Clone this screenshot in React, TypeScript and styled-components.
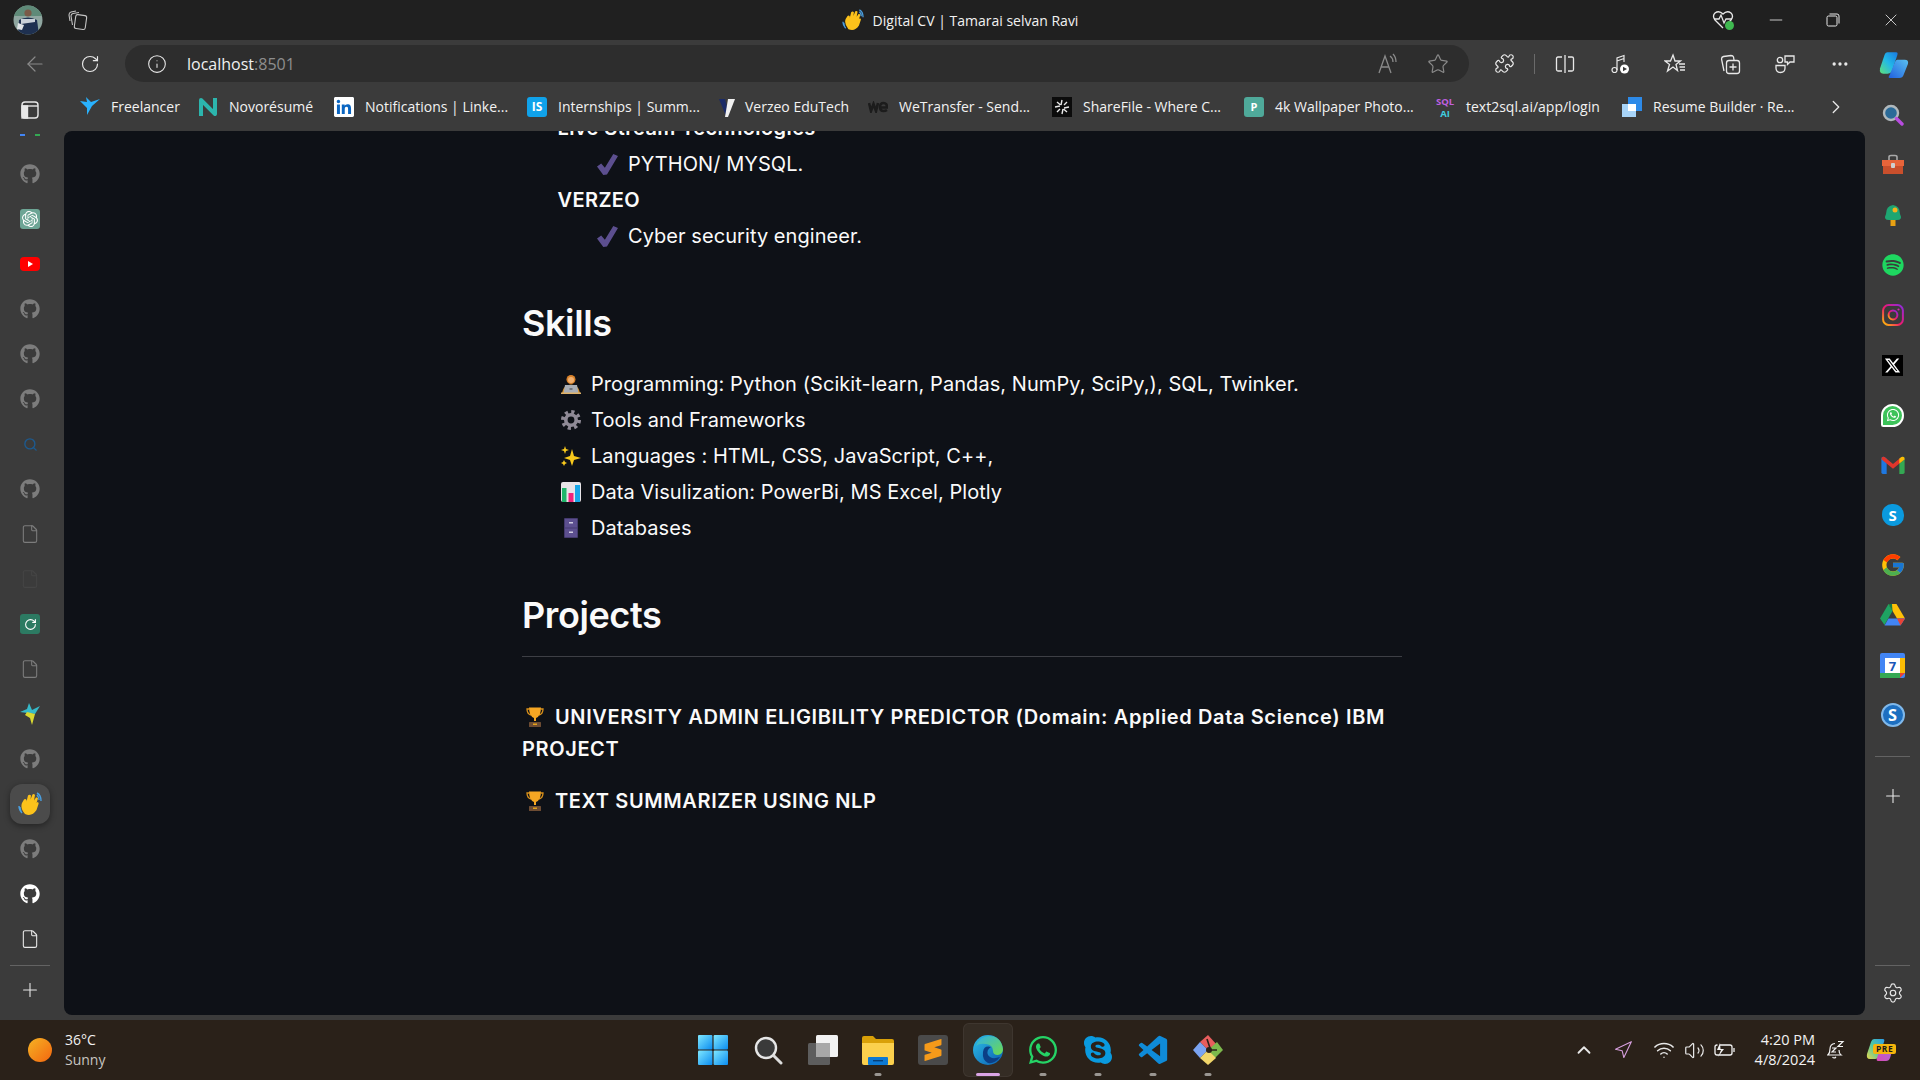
import React from 'react';
import styled, { createGlobalStyle } from 'styled-components';
import {
  ArrowLeft, RotateCw, Info, Star, Puzzle, Ellipsis, Plus, Settings, ChevronRight, ChevronUp,
  Search, File, Minus, X, Wifi, Volume2, Navigation,
} from 'lucide-react';
import { FaGithub, FaSpotify, FaWhatsapp, FaSkype } from 'react-icons/fa';
import { FaXTwitter } from 'react-icons/fa6';
import { SiOpenai, SiLinkedin, SiSublimetext } from 'react-icons/si';
import { FcGoogle } from 'react-icons/fc';
import { BiLogoVisualStudio } from 'react-icons/bi';

const Global = createGlobalStyle`
  html, body { margin: 0; padding: 0; background: #3b3b3b; }
  body { width: 1920px; height: 1080px; overflow: hidden; font-family: "Open Sans", "Liberation Sans", sans-serif; }
  * { box-sizing: border-box; }
`;

const Screen = styled.div`
  width: 1920px;
  height: 1080px;
  display: flex;
  flex-direction: column;
  background: #3b3b3b;
  overflow: hidden;
`;

/* title bar */
const TitleBar = styled.div`
  height: 40px;
  flex: none;
  background: #202020;
  display: grid;
  grid-template-columns: 1fr auto 1fr;
  align-items: center;
`;
const TitleLeft = styled.div`
  display: flex;
  align-items: center;
  padding-left: 13px;
  gap: 24px;
`;
const TitleCenter = styled.div`
  display: flex;
  align-items: center;
  gap: 9px;
  color: #f2f2f2;
  font-size: 14px;
`;
const TitleRight = styled.div`
  display: flex;
  justify-content: flex-end;
  align-items: center;
`;
const Slot = styled.div<{ $w: number }>`
  width: ${p => p.$w}px;
  flex: none;
  display: flex;
  align-items: center;
  justify-content: center;
  position: relative;
  color: #e8e8e8;
  svg { flex: none; }
`;
const OkBadge = styled.span`
  position: absolute;
  left: 27px;
  top: 11px;
  width: 9px;
  height: 9px;
  border-radius: 50%;
  background: #3fb950;
`;

/* toolbar */
const ToolBar = styled.div`
  height: 42px;
  flex: none;
  background: #3b3b3b;
  display: flex;
  align-items: flex-end;
  padding-left: 7.5px;
  ${Slot} { height: 37px; }
`;
const Address = styled.div`
  flex: 1;
  height: 37px;
  margin-left: 7.5px;
  padding: 0 6px 0 10px;
  background: #2d2d2d;
  border-radius: 19px;
  display: flex;
  align-items: center;
`;
const Url = styled.div`
  flex: 1;
  margin-left: 8px;
  font-size: 16px;
  color: #f0f0f0;
  span { color: #8d8d8d; }
`;
const Separator = styled.div`
  width: 1px;
  height: 20px;
  background: #6a6a6a;
`;

/* body */
const Middle = styled.div`
  flex: 1;
  display: flex;
  min-height: 0;
`;
const LeftRail = styled.div`
  width: 64px;
  flex: none;
  padding-right: 4px;
  display: flex;
  flex-direction: column;
  align-items: center;
`;
const RailTop = styled.div`
  height: 50px;
  display: flex;
  align-items: center;
  justify-content: center;
  padding-top: 6px;
  color: #e8e8e8;
`;
const PeekRow = styled.div`
  height: 19.5px;
  display: flex;
  gap: 10px;
  padding-top: 1px;
  align-items: flex-start;
`;
const PeekDot = styled.span<{ $c: string }>`
  width: 5px;
  height: 2px;
  margin-top: 1px;
  background: ${p => p.$c};
`;
const RailItem = styled.div<{ $active?: boolean; $h?: number }>`
  width: 40px;
  height: ${p => (p.$active ? 40 : p.$h ?? 45)}px;
  margin: ${p => (p.$active ? '2.5px 0' : '0')};
  flex: none;
  display: flex;
  align-items: center;
  justify-content: center;
  color: #7c7c7c;
  background: ${p => (p.$active ? '#4b4b4b' : 'transparent')};
  border-radius: 12px;
  box-shadow: ${p => (p.$active ? '0 2px 6px rgba(0,0,0,.4)' : 'none')};
`;
const RailDivider = styled.div<{ $w: number; $mt?: number }>`
  width: ${p => p.$w}px;
  height: 1px;
  flex: none;
  margin-top: ${p => p.$mt ?? 0}px;
  background: #636363;
`;
const GptTile = styled.div<{ $bg: string }>`
  width: 20px;
  height: 20px;
  border-radius: 3px;
  background: ${p => p.$bg};
  color: #fff;
  display: flex;
  align-items: center;
  justify-content: center;
`;
const Center = styled.div`
  flex: 1;
  min-width: 0;
  display: flex;
  flex-direction: column;
`;
const Bookmarks = styled.div`
  height: 49px;
  flex: none;
  display: flex;
  align-items: center;
  padding-left: 16px;
`;
const Bookmark = styled.div<{ $w: number; $gap?: number }>`
  width: ${p => p.$w}px;
  flex: none;
  display: flex;
  align-items: center;
  gap: ${p => p.$gap ?? 11}px;
  color: #f2f2f2;
  font-size: 14px;
  white-space: nowrap;
  svg { flex: none; }
`;
const BookmarkIcon = styled.div<{ $bg: string; $c?: string; $fs?: number }>`
  width: 20px;
  height: 20px;
  flex: none;
  border-radius: 3px;
  background: ${p => p.$bg};
  color: ${p => p.$c ?? '#fff'};
  font-size: ${p => p.$fs ?? 12}px;
  font-weight: 700;
  display: flex;
  align-items: center;
  justify-content: center;
`;
const Chevron = styled.div`
  margin-left: 25px;
  color: #e8e8e8;
  display: flex;
`;
const Page = styled.div`
  height: 884px;
  flex: none;
  background: #0e1117;
  border-radius: 8px;
  overflow: hidden;
  font-family: Inter, "Liberation Sans", sans-serif;
  color: #fafafa;
`;
const Content = styled.div`
  width: 880px;
  margin: -21px 0 0 458px;
`;
const Heading = styled.div`
  padding-left: 35.5px;
  font-size: 20px;
  font-weight: 600;
  line-height: 36px;
  height: 36px;
  letter-spacing: 0.4px;
`;
const CheckRow = styled.div`
  display: flex;
  align-items: center;
  gap: 10px;
  padding-left: 75px;
  height: 36px;
  font-size: 20px;
  letter-spacing: 0.06px;
`;
const Title = styled.h2<{ $mt: number }>`
  margin: ${p => p.$mt}px 0 0;
  font-size: 36px;
  line-height: 44px;
  font-weight: 600;
  letter-spacing: -0.4px;
`;
const SkillList = styled.div`
  margin-top: 20.5px;
  padding-left: 39px;
`;
const SkillRow = styled.div`
  display: flex;
  align-items: center;
  gap: 10px;
  height: 36px;
  font-size: 20px;
  letter-spacing: 0.06px;
`;
const CabinetBox = styled.span`
  width: 20px;
  display: flex;
  justify-content: center;
`;
const Rule = styled.hr`
  margin: 19px 0 0;
  border: 0;
  height: 1px;
  background: #3d3f45;
`;
const Project = styled.p<{ $mt: number }>`
  margin: ${p => p.$mt}px 0 0;
  font-size: 20px;
  line-height: 32px;
  font-weight: 600;
  letter-spacing: 0.62px;
  svg { vertical-align: -3px; margin: 0 11px 0 4px; }
`;
const BottomStrip = styled.div`
  flex: 1;
`;
const RightRail = styled.div`
  width: 55px;
  flex: none;
  display: flex;
  flex-direction: column;
  align-items: center;
  padding-top: 8px;
`;
const RightItem = styled.div<{ $h?: number; $mt?: number }>`
  height: ${p => p.$h ?? 50}px;
  margin-top: ${p => p.$mt ?? 0}px;
  width: 40px;
  flex: none;
  display: flex;
  align-items: center;
  justify-content: center;
  color: #e8e8e8;
`;
const Grow = styled.div`
  flex: 1;
`;
const XTile = styled.div`
  width: 21px;
  height: 21px;
  background: #000;
  color: #fff;
  display: flex;
  align-items: center;
  justify-content: center;
`;
const WaBubble = styled.div`
  width: 23px;
  height: 23px;
  border-radius: 50% 50% 50% 10%;
  background: #3dc35a;
  border: 2px solid #fff;
  color: #fff;
  display: flex;
  align-items: center;
  justify-content: center;
`;
const LetterBlob = styled.div<{ $round?: boolean; $size: number }>`
  width: ${p => p.$size}px;
  height: ${p => p.$size}px;
  border-radius: ${p => (p.$round ? '50%' : '45% 50% 45% 50%')};
  background: ${p => (p.$round ? '#1d6fc0' : '#0a9adf')};
  border: ${p => (p.$round ? '2px solid #7fb8ea' : 'none')};
  color: #fff;
  font-family: "Open Sans", sans-serif;
  font-weight: 700;
  font-size: ${p => p.$size * 0.68}px;
  line-height: 1;
  display: flex;
  align-items: center;
  justify-content: center;
`;

/* taskbar */
const TaskBar = styled.div`
  height: 60px;
  flex: none;
  background: #2a2119;
  display: grid;
  grid-template-columns: 1fr auto 1fr;
  align-items: center;
`;
const Weather = styled.div`
  display: flex;
  align-items: center;
  gap: 13px;
  padding-left: 28px;
  color: #f2f2f2;
  font-size: 14px;
  line-height: 20px;
`;
const Sun = styled.div`
  width: 24px;
  height: 24px;
  border-radius: 50%;
  background: linear-gradient(135deg, #f5b324, #f3660f);
`;
const Sunny = styled.div`
  color: #c8c5c1;
`;
const Dock = styled.div`
  display: flex;
  align-items: center;
`;
const DockItem = styled.div<{ $active?: boolean; $dot?: boolean }>`
  width: 55px;
  height: 54px;
  display: flex;
  align-items: center;
  justify-content: center;
  position: relative;
  &::before {
    content: '';
    display: ${p => (p.$active ? 'block' : 'none')};
    position: absolute;
    inset: 0 2.5px;
    border-radius: 6px;
    background: rgba(255,255,255,.05);
    border: 1px solid rgba(255,255,255,.05);
  }
  &::after {
    content: '';
    display: ${p => (p.$active || p.$dot ? 'block' : 'none')};
    position: absolute;
    bottom: 1px;
    left: 50%;
    transform: translateX(-50%);
    width: ${p => (p.$active ? 24 : 7)}px;
    height: 3px;
    border-radius: 2px;
    background: ${p => (p.$active ? '#dba4e4' : '#9a9692')};
  }
  svg { position: relative; }
`;
const Tray = styled.div`
  display: flex;
  justify-content: flex-end;
  align-items: center;
  padding-right: 15px;
`;
const Clock = styled.div`
  width: 69px;
  flex: none;
  white-space: nowrap;
  display: flex;
  flex-direction: column;
  align-items: flex-end;
  color: #f2f2f2;
  font-size: 14.5px;
  line-height: 20px;
`;
const SublimeTile = styled.div`
  width: 30px;
  height: 30px;
  border-radius: 3px;
  background: #4a4a4a;
  color: #f59a1a;
  display: flex;
  align-items: center;
  justify-content: center;
  position: relative;
`;
const PreBadge = styled.span`
  position: absolute;
  left: 18px;
  top: 6px;
  background: #f5b40c;
  color: #1a1a1a;
  font-size: 8.5px;
  font-weight: 700;
  padding: 0 3px;
  line-height: 10px;
  border-radius: 2px;
  letter-spacing: .5px;
`;

/* drawings */
const Avatar = () => (
  <svg width="30" height="30" viewBox="0 0 30 30">
    <defs><clipPath id="av"><circle cx="15" cy="15" r="14.5" /></clipPath></defs>
    <g clipPath="url(#av)">
      <rect width="30" height="30" fill="#8fa6a0" />
      <rect width="30" height="11" fill="#5f8a78" />
      <circle cx="15" cy="8" r="3.6" fill="#7a5a48" />
      <path d="M5 30 L6 15 Q15 10 24 15 L26 30Z" fill="#1e3050" />
      <path d="M8 14 L22 14 L22 17 L8 19Z" fill="#c9d0d8" />
      <path d="M5 18 L11 20 L9 25 L4 24Z" fill="#dfe3e6" />
    </g>
  </svg>
);
const TabsIcon = () => (
  <svg width="22" height="22" viewBox="0 0 22 22" fill="none" stroke="#c4c4c4" strokeWidth="1.1">
    <rect x="8" y="6" width="11" height="14" rx="2" transform="rotate(8 13 13)" />
    <path d="M5.5 16 L4 7 Q4 5 6 4.5 L12 3.5" />
    <path d="M3 12 L2 6 Q2 3.5 4 3 L9 2" />
  </svg>
);
const Wave = ({ s }: { s: number }) => (
  <svg width={s} height={s} viewBox="0 0 24 24">
    <path d="M4 21 Q1 18 1 14 M3 19 Q2 17 2 15" stroke="#4a9fe0" strokeWidth="1.4" fill="none" />
    <path d="M19 1 Q23 3 23 9 M19 3 Q21 5 21 8" stroke="#4a9fe0" strokeWidth="1.4" fill="none" />
    <path d="M7 22 Q2 16 4 11 L6 7.5 Q7.5 6.5 8.5 8 L8.5 9.5 L10 3.5 Q11.5 2 13 3.5 L12.5 7.5 L14.5 2.5 Q16 1.5 17 3 L16 8.5 L18 5.5 Q19.5 5 20 6.5 L18.5 11 L19.5 10 Q21 10.5 20.5 12 L18.5 18 Q14 25 7 22Z" fill="#fcc21b" />
  </svg>
);
const Check = () => (
  <svg width="21" height="21" viewBox="0 0 20 20"><path d="M0 12 L4 9 L7.5 13 L15.5 0 L20 2 L9.5 19.5 L6 20Z" fill="#5c4f8f" /></svg>
);
const Trophy = () => (
  <svg width="18" height="20" viewBox="0 0 18 20">
    <path d="M3 2 H1 Q1 7 5 8 M15 2 H17 Q17 7 13 8" stroke="#d9901a" strokeWidth="1.3" fill="none" />
    <path d="M3 0.5 H15 Q15 9 10 11 V14 H8 V11 Q3 9 3 0.5Z" fill="#f5a623" />
    <rect x="3" y="15" width="12" height="5" rx="0.5" fill="#6d4c33" />
    <rect x="7" y="16.5" width="4" height="1.5" fill="#e3a21a" />
  </svg>
);
const Worker = () => (
  <svg width="20" height="20" viewBox="0 0 20 20">
    <circle cx="10" cy="5.5" r="4.5" fill="#d9822b" />
    <circle cx="10" cy="6" r="3" fill="#f0b070" />
    <path d="M1 19 Q2 11 10 10.5 Q18 11 19 19Z" fill="#d9952f" />
    <path d="M4 11 H16 L17.5 19 H2.5Z" fill="#a9aeb6" />
    <rect x="8.5" y="14" width="3" height="2" fill="#70757d" />
    <rect y="18.5" width="20" height="1.5" fill="#e0b36a" />
  </svg>
);
const Gear = () => (
  <svg width="20" height="20" viewBox="0 0 20 20" fill="none" stroke="#8f8a96">
    <circle cx="10" cy="10" r="5.2" strokeWidth="3.6" />
    <circle cx="10" cy="10" r="8" strokeWidth="4" strokeDasharray="3.1 3.18" />
  </svg>
);
const Sparkles = () => (
  <svg width="20" height="20" viewBox="0 0 20 20" fill="#f8c91c">
    <path d="M11 3 L13 10 L20 12 L13 14 L11 20 L9 14 L3 12 L9 10Z" />
    <path d="M4 0 L5 3 L8 4 L5 5 L4 8 L3 5 L0 4 L3 3Z" />
    <path d="M3 14 L4 16 L6 17 L4 18 L3 20 L2 18 L0 17 L2 16Z" />
  </svg>
);
const BarChart = () => (
  <svg width="20" height="20" viewBox="0 0 20 20">
    <rect width="20" height="20" rx="2" fill="#e8e4e8" />
    <rect x="1" y="6" width="4.5" height="14" fill="#1fb56a" />
    <rect x="7.5" y="11" width="5" height="9" fill="#f0247c" />
    <rect x="14" y="3" width="5" height="17" fill="#18a7e8" />
  </svg>
);
const Cabinet = () => (
  <svg width="14" height="20" viewBox="0 0 14 20">
    <rect width="14" height="20" rx="1" fill="#443a6e" />
    <rect x="1" y="1" width="12" height="8.5" fill="#5c4f8f" />
    <rect x="1" y="10.5" width="12" height="8.5" fill="#5c4f8f" />
    <rect x="5" y="4" width="4" height="1.5" fill="#cfcbe0" />
    <rect x="5" y="13.5" width="4" height="1.5" fill="#cfcbe0" />
  </svg>
);
const ReadAloud = () => (
  <svg width="24" height="24" viewBox="0 0 24 24" fill="none" stroke="#8a8a8a" strokeWidth="1.3">
    <path d="M3 21 L9 4 L15 21 M5 15 H13" />
    <path d="M14 4 Q17 6 17 10 M17 2 Q20 5 20 10" />
  </svg>
);
const SplitIcon = () => (
  <svg width="20" height="20" viewBox="0 0 20 20" fill="none" stroke="#e8e8e8" strokeWidth="1.3">
    <path d="M7 3 H3 Q1.5 3 1.5 4.5 V15.5 Q1.5 17 3 17 H7 M10 1 V19 M13 3 H17 Q18.5 3 18.5 4.5 V15.5 Q18.5 17 17 17 H13" />
  </svg>
);
const MusicIcon = () => (
  <svg width="22" height="22" viewBox="0 0 22 22" fill="none" stroke="#e8e8e8" strokeWidth="1.2">
    <circle cx="5.5" cy="17" r="2.5" />
    <path d="M8 17 V5 L15 2.5 V9 M8 8 L15 5.5" />
    <circle cx="15.5" cy="16" r="4.5" fill="#fff" stroke="none" />
    <path d="M14 13.8 L18 16 L14 18.2Z" fill="#3b3b3b" stroke="none" />
  </svg>
);
const FavList = () => (
  <svg width="22" height="22" viewBox="0 0 22 22" fill="none" stroke="#e8e8e8" strokeWidth="1.3">
    <path d="M9 2 L11 8 H16.5 L12 11.5 L13.5 17.5 L9 14 L3.5 18 L5.5 11.5 L1 8 H6.5Z" />
    <path d="M15 11 H21 M15.5 14 H21 M16 17 H21" />
  </svg>
);
const CollectIcon = () => (
  <svg width="22" height="22" viewBox="0 0 22 22" fill="none" stroke="#e8e8e8" strokeWidth="1.3">
    <path d="M5 18 L2.5 6 Q2.5 4 4.5 3.5 L12 2.5 Q14 2.5 14.5 4 L15 7" />
    <rect x="7.5" y="7.5" width="13" height="13" rx="2.5" />
    <path d="M14 10.5 V17.5 M10.5 14 H17.5" />
  </svg>
);
const ShareIcon = () => (
  <svg width="22" height="22" viewBox="0 0 22 22" fill="none" stroke="#e8e8e8" strokeWidth="1.3">
    <circle cx="6" cy="7" r="2.7" />
    <path d="M2 12.5 H11 V15 Q11 19.5 6.5 19.5 Q2 19.5 2 15Z" />
    <path d="M11 3 H20 V9 H16 L13.5 11.5 V9 H11Z" />
  </svg>
);
const Copilot = () => (
  <svg width="30" height="30" viewBox="0 0 28 28">
    <defs>
      <linearGradient id="cp1" x1="0" y1="1" x2="1" y2="0"><stop offset="0" stopColor="#5ee07a" /><stop offset=".5" stopColor="#22b8e8" /><stop offset="1" stopColor="#1a78e0" /></linearGradient>
      <linearGradient id="cp2" x1="0" y1="1" x2="1" y2="0"><stop offset="0" stopColor="#2060e0" /><stop offset="1" stopColor="#5ac0f0" /></linearGradient>
    </defs>
    <path d="M8 3 H16 Q18 3 17 6 L12 21 Q11 23 8 23 H4 Q0 23 1 18 L5 6 Q6 3 8 3Z" fill="url(#cp1)" />
    <path d="M17 10 H24 Q28 10 27 14 L23 24 Q22 27 19 27 H10 Q8 27 10 24 L15 12 Q16 10 17 10Z" fill="url(#cp2)" />
  </svg>
);
const CopilotPre = () => (
  <svg width="28" height="24" viewBox="0 0 28 24">
    <defs>
      <linearGradient id="cq1" x1="0" y1="1" x2="1" y2="0"><stop offset="0" stopColor="#e8d84a" /><stop offset=".5" stopColor="#50c8a0" /><stop offset="1" stopColor="#2a9ae8" /></linearGradient>
      <linearGradient id="cq2" x1="0" y1="1" x2="1" y2="0"><stop offset="0" stopColor="#d84ab0" /><stop offset="1" stopColor="#a070e8" /></linearGradient>
    </defs>
    <path d="M8 1 H17 Q19 1 18 4 L13 18 Q12 21 9 21 H4 Q0 21 1 16 L5 4 Q6 1 8 1Z" fill="url(#cq1)" />
    <path d="M17 6 H24 Q28 6 27 10 L24 20 Q23 23 20 23 H12 Q10 23 11 20 L15 8 Q16 6 17 6Z" fill="url(#cq2)" />
  </svg>
);
const HealthIcon = () => (
  <svg width="22" height="20" viewBox="0 0 22 20" fill="none" stroke="#e8e8e8" strokeWidth="1.3">
    <path d="M11 18 L3 10 Q0 6 3 3 Q7 0 11 4 Q15 0 19 3 Q22 6 19 10 L16 13" />
    <path d="M2 9 H7 L9 5 L12 13 L14 9 H20" />
  </svg>
);
const RestoreIcon = () => (
  <svg width="14" height="14" viewBox="0 0 14 14" fill="none" stroke="#e8e8e8" strokeWidth="1">
    <rect x="1" y="3" width="10" height="10" rx="1.5" />
    <path d="M3.5 1 H11 Q13 1 13 3 V10.5" />
  </svg>
);
const Bird = () => (
  <svg width="20" height="22" viewBox="0 0 20 22">
    <path d="M0 9 L7 6 L9 0 L12 7 L20 3 L15 11 Z" fill="#35b9c9" />
    <path d="M7 9 L15 11 L12 22 L10 15 L5 12 Z" fill="#d8d832" />
  </svg>
);
const FreelancerBird = () => (
  <svg width="20" height="20" viewBox="0 0 20 20">
    <path d="M0 4 L7 5 L6 0 L11 5 L20 2 L12 9 L7 18 L7 11 Z" fill="#29b2fe" />
  </svg>
);
const NovoIcon = () => (
  <svg width="20" height="20" viewBox="0 0 20 20" fill="none" stroke="#2cb5ad" strokeWidth="4" strokeLinejoin="round">
    <path d="M3 19 V3 L17 17 V1" />
  </svg>
);
const VerzeoIcon = () => (
  <svg width="20" height="20" viewBox="0 0 20 20">
    <path d="M2 2 H8 L11 14 L9 19Z" fill="#1a2a66" />
    <path d="M11 2 H18 L11 20 H8Z" fill="#f0f0f0" />
  </svg>
);
const ShareFile = () => (
  <svg width="20" height="20" viewBox="0 0 20 20">
    <rect width="20" height="20" fill="#0b0b0b" />
    <g stroke="#e8e8e8" strokeWidth="1.4">
      <path d="M10 3 L9 8 M10 17 L11 12 M3 10 L8 9 M17 10 L12 11 M5 5 L8.5 8 M15 15 L11.5 12 M15 5 L12 8 M5 15 L8 12" />
    </g>
  </svg>
);
const SqlIcon = () => (
  <svg width="20" height="26" viewBox="0 0 20 26">
    <text x="10" y="11" textAnchor="middle" fontSize="9.5" fontWeight="700" fontFamily="Open Sans" fill="#c060e0">SQL</text>
    <text x="10" y="23" textAnchor="middle" fontSize="9.5" fontWeight="700" fontFamily="Open Sans" fill="#40d0e0">AI</text>
  </svg>
);
const ResumeIcon = () => (
  <svg width="20" height="20" viewBox="0 0 20 20">
    <rect x="6" y="0" width="14" height="14" fill="#2d8ae8" />
    <rect x="0" y="7" width="14" height="13" fill="#a8d4f8" />
    <rect x="6" y="7" width="8" height="7" fill="#fff" />
  </svg>
);
const WeIcon = () => (
  <svg width="20" height="12" viewBox="0 0 20 12" fill="none" stroke="#1c1c1c" strokeWidth="2.6">
    <path d="M1 2 L3 10 L5.5 3 L8 10 L10 2" />
    <path d="M12 6.5 H19 Q19 2 15.5 2 Q12 2 12 6 Q12 10 15.5 10 Q17.5 10 19 9" />
  </svg>
);
const Magnifier = () => (
  <svg width="22" height="22" viewBox="0 0 22 22">
    <circle cx="9" cy="9" r="7" fill="#2a6a98" stroke="#b0b8bc" strokeWidth="2.4" />
    <path d="M14.5 14.5 L20 20" stroke="#b84ce0" strokeWidth="3.4" strokeLinecap="round" />
  </svg>
);
const Toolbox = () => (
  <svg width="24" height="22" viewBox="0 0 24 22">
    <path d="M8 6 V3 Q8 1.5 10 1.5 H14 Q16 1.5 16 3 V6" stroke="#a8a8a8" strokeWidth="1.6" fill="none" />
    <rect x="1" y="6" width="22" height="6" fill="#e8643a" />
    <rect x="2" y="12" width="20" height="8" fill="#c94f2c" />
    <rect x="10" y="9" width="4" height="5" rx="1" fill="#cfcfcf" />
  </svg>
);
const Tree = () => (
  <svg width="20" height="22" viewBox="0 0 20 22">
    <path d="M10 1 Q17 2 17 10 Q20 16 14 16 H6 Q0 16 3 10 Q3 2 10 1Z" fill="#1ea672" />
    <rect x="7.5" y="16" width="5" height="6" fill="#e8a012" />
    <circle cx="12" cy="6" r="2.5" fill="#f6b21b" />
  </svg>
);
const Insta = () => (
  <svg width="22" height="22" viewBox="0 0 20 20" fill="none">
    <defs><linearGradient id="ig" x1="0" y1="1" x2="1" y2="0"><stop offset="0" stopColor="#ffc400" /><stop offset=".45" stopColor="#f0186c" /><stop offset="1" stopColor="#8a2be2" /></linearGradient></defs>
    <rect x="1" y="1" width="18" height="18" rx="5" stroke="url(#ig)" strokeWidth="1.8" />
    <circle cx="10" cy="10" r="4" stroke="url(#ig)" strokeWidth="1.8" />
    <circle cx="15" cy="5" r="1" fill="#d02cb0" />
  </svg>
);
const Gmail = () => (
  <svg width="24" height="19" viewBox="0 0 22 18">
    <path d="M0 3 Q0 0 3 1 L5 2.5 V17 H1.5 Q0 17 0 15.5Z" fill="#1f78e0" />
    <path d="M22 3 Q22 0 19 1 L17 2.5 V17 H20.5 Q22 17 22 15.5Z" fill="#34a853" />
    <path d="M0 3 Q0 0 3 1 L11 7.5 L19 1 Q20 0.5 22 3 L11 12 Z" fill="#e0352b" />
    <path d="M17 2.5 L19 1 Q22 0 22 3 L17 7Z" fill="#fbbc04" />
  </svg>
);
const Drive = () => (
  <svg width="25" height="22" viewBox="0 0 25 22">
    <path d="M8.5 0 H16.5 L25 14.5 H17Z" fill="#ffc107" />
    <path d="M8.5 0 L12.5 7 L4.5 21 L0 14.5Z" fill="#1ea362" />
    <path d="M4.5 21.5 L8.5 14.5 H25 L20.5 21.5Z" fill="#4285f4" />
    <path d="M20.5 21.5 L17 14.5 H25Z" fill="#ea4335" />
    <path d="M8.5 0 H12 L12.5 7 Z" fill="#157a46" />
  </svg>
);
const Calendar = () => (
  <svg width="25" height="25" viewBox="0 0 25 25">
    <rect width="25" height="25" rx="2" fill="#4285f4" />
    <rect x="5" y="5" width="15" height="15" fill="#fff" />
    <rect x="20" y="5" width="5" height="15" fill="#fbbc04" />
    <rect y="20" width="20" height="5" fill="#34a853" />
    <path d="M20 20 H25 L20 25Z" fill="#ea4335" />
    <text x="12.5" y="17.5" textAnchor="middle" fontSize="13" fontWeight="700" fontFamily="Open Sans" fill="#1a56b8">7</text>
  </svg>
);
const WinLogo = () => (
  <svg width="30" height="30" viewBox="0 0 30 30">
    <defs><linearGradient id="wn" x1="0" y1="0" x2="1" y2="1"><stop offset="0" stopColor="#7fe8ff" /><stop offset="1" stopColor="#0a8cf0" /></linearGradient></defs>
    <rect width="14.4" height="14.4" rx="1" fill="url(#wn)" />
    <rect x="15.6" width="14.4" height="14.4" rx="1" fill="url(#wn)" />
    <rect y="15.6" width="14.4" height="14.4" rx="1" fill="url(#wn)" />
    <rect x="15.6" y="15.6" width="14.4" height="14.4" rx="1" fill="url(#wn)" />
  </svg>
);
const TaskSearch = () => (
  <svg width="30" height="30" viewBox="0 0 30 30" fill="none">
    <circle cx="13" cy="13" r="10" fill="#3a3a3a" stroke="#e6e6e6" strokeWidth="2.4" />
    <path d="M21 21 L28 28" stroke="#dcdcdc" strokeWidth="3" strokeLinecap="round" />
  </svg>
);
const TaskView = () => (
  <svg width="30" height="30" viewBox="0 0 30 30">
    <rect x="0" y="8" width="22" height="22" rx="1.5" fill="#5d5d5d" />
    <rect x="8" y="0" width="22" height="22" rx="1.5" fill="#f2f2f2" />
    <rect x="8" y="8" width="14" height="14" fill="#a8a8a8" />
  </svg>
);
const Folder = () => (
  <svg width="32" height="30" viewBox="0 0 32 30">
    <path d="M0 3 Q0 1 2 1 H11 L14 4 H30 Q32 4 32 6 V28 H0Z" fill="#d9a008" />
    <path d="M0 8 H32 V28 Q32 30 30 30 H2 Q0 30 0 28Z" fill="#fbd04d" />
    <rect x="6" y="22" width="20" height="8" rx="1" fill="#0c79d4" />
    <rect x="11" y="25" width="10" height="1.4" fill="#063f78" />
  </svg>
);
const Edge = () => (
  <svg width="30" height="30" viewBox="0 0 30 30">
    <defs>
      <linearGradient id="eg1" x1="0" y1="0" x2="1" y2="1"><stop offset="0" stopColor="#2ec0e8" /><stop offset="1" stopColor="#0a5cb0" /></linearGradient>
      <linearGradient id="eg2" x1="0" y1="0" x2="1" y2="1"><stop offset="0" stopColor="#2fb0e8" /><stop offset="1" stopColor="#6fdc4c" /></linearGradient>
    </defs>
    <circle cx="15" cy="15" r="15" fill="url(#eg1)" />
    <path d="M3 11 Q7 1 16 1 Q28 1 30 14 Q30 19 25 20 Q20 20 20 16 Q20 10 13 9 Q6 8 3 11Z" fill="url(#eg2)" />
    <path d="M10 17 Q11 10 18 12 Q13 15 15 20 Q18 25 27 22 Q22 29 15 28 Q9 25 10 17Z" fill="#0b3f86" />
  </svg>
);
const GitApp = () => (
  <svg width="30" height="30" viewBox="0 0 30 30">
    <path d="M15 0 L24 10 L15 15 L7 7Z" fill="#e85d5d" />
    <path d="M0 15 L7 7 L15 15 L7 23Z" fill="#7ba4f2" />
    <path d="M24 7 L30 15 L22 23 L15 15Z" fill="#7cb84c" />
    <path d="M7 23 L15 15 L23 23 L15 30Z" fill="#f2d66a" />
    <circle cx="16" cy="15" r="3" fill="#2a2119" />
    <path d="M14 4 L17 13 M18 15 H24" stroke="#2a2119" strokeWidth="1.6" />
  </svg>
);
const BellZ = () => (
  <svg width="20" height="20" viewBox="0 0 20 20" fill="none" stroke="#f2f2f2" strokeWidth="1.2">
    <path d="M3 15 Q5 13 5 9 Q5 4 10 3.5 M2 15 H16 Q14 13.5 14 10 M7.5 17 Q9 19 11 17" />
    <path d="M7 8 H11 L7 12 H11 M13 1.5 H18 L13 6.5 H18" />
  </svg>
);
const Battery = () => (
  <svg width="22" height="16" viewBox="0 0 22 16" fill="none" stroke="#f2f2f2" strokeWidth="1.3">
    <path d="M7 3 H17 Q19 3 19 5 V11 Q19 13 17 13 H4 Q2 13 2 11 V5 Q2 3 4 3 H4.5" />
    <path d="M21 6 V10" />
    <path d="M7 1 L4 8 H8 L5 15 L11 7 H7.5Z" fill="#f2f2f2" stroke="none" />
  </svg>
);

const bookmarks: { w: number; gap?: number; label: string; icon: React.ReactNode }[] = [
  { w: 118, label: 'Freelancer', icon: <FreelancerBird /> },
  { w: 136, label: 'Novorésumé', icon: <NovoIcon /> },
  { w: 193, label: 'Notifications | Linke...', icon: <BookmarkIcon $bg="#0a66c2" $fs={13}><SiLinkedin size={20} /></BookmarkIcon> },
  { w: 190, label: 'Internships | Summ...', icon: <BookmarkIcon $bg="#10a2ea">IS</BookmarkIcon> },
  { w: 151, gap: 8, label: 'Verzeo EduTech', icon: <VerzeoIcon /> },
  { w: 184, label: 'WeTransfer - Send...', icon: <WeIcon /> },
  { w: 192, label: 'ShareFile - Where C...', icon: <ShareFile /> },
  { w: 191, label: '4k Wallpaper Photo...', icon: <BookmarkIcon $bg="#4fa99a" $fs={11}>P</BookmarkIcon> },
  { w: 187, label: 'text2sql.ai/app/login', icon: <SqlIcon /> },
  { w: 178, label: 'Resume Builder · Re...', icon: <ResumeIcon /> },
];

const leftRail: React.ReactNode[] = [
  <FaGithub size={20} />,
  <GptTile $bg="#6da595"><SiOpenai size={16} /></GptTile>,
  <GptTile $bg="transparent"><svg width="20" height="14" viewBox="0 0 20 14"><rect width="20" height="14" rx="4" fill="#f00" /><path d="M8 4 L13 7 L8 10Z" fill="#fff" /></svg></GptTile>,
  <FaGithub size={20} />,
  <FaGithub size={20} />,
  <FaGithub size={20} />,
  <Search size={15} color="#1d5a8f" strokeWidth={2.2} />,
  <FaGithub size={20} />,
  <File size={20} strokeWidth={1.3} />,
  <File size={20} color="#454545" strokeWidth={1.3} />,
  <GptTile $bg="#2c7a62"><RotateCw size={13} /></GptTile>,
  <File size={20} strokeWidth={1.3} />,
  <Bird />,
  <FaGithub size={20} />,
  <Wave s={24} />,
  <FaGithub size={20} />,
  <FaGithub size={20} color="#ffffff" />,
  <File size={20} color="#e8e8e8" strokeWidth={1.3} />,
];

const rightRail: React.ReactNode[] = [
  <Magnifier />,
  <Toolbox />,
  <Tree />,
  <FaSpotify size={22} color="#1ed760" />,
  <Insta />,
  <XTile><FaXTwitter size={17} /></XTile>,
  <WaBubble><FaWhatsapp size={14} /></WaBubble>,
  <Gmail />,
  <LetterBlob $size={22}>S</LetterBlob>,
  <FcGoogle size={26} />,
  <Drive />,
  <Calendar />,
  <LetterBlob $round $size={24}>S</LetterBlob>,
];

const skills: { icon: React.ReactNode; text: string }[] = [
  { icon: <Worker />, text: 'Programming: Python (Scikit-learn, Pandas, NumPy, SciPy,), SQL, Twinker.' },
  { icon: <Gear />, text: 'Tools and Frameworks' },
  { icon: <Sparkles />, text: 'Languages : HTML, CSS, JavaScript, C++,' },
  { icon: <BarChart />, text: 'Data Visulization: PowerBi, MS Excel, Plotly' },
  { icon: <CabinetBox><Cabinet /></CabinetBox>, text: 'Databases' },
];

export default function App() {
  return (
    <Screen>
      <Global />
      <TitleBar>
        <TitleLeft><Avatar /><TabsIcon /></TitleLeft>
        <TitleCenter><Wave s={22} />Digital CV | Tamarai selvan Ravi</TitleCenter>
        <TitleRight>
          <Slot $w={50}><HealthIcon /><OkBadge /></Slot>
          <Slot $w={56}><Minus size={20} strokeWidth={1} /></Slot>
          <Slot $w={58}><RestoreIcon /></Slot>
          <Slot $w={58}><X size={20} strokeWidth={1} /></Slot>
        </TitleRight>
      </TitleBar>

      <ToolBar>
        <Slot $w={55}><ArrowLeft size={24} color="#8a8a8a" strokeWidth={1.2} /></Slot>
        <Slot $w={55}><RotateCw size={20} strokeWidth={1.4} /></Slot>
        <Address>
          <Slot $w={44}><Info size={20} strokeWidth={1.3} /></Slot>
          <Url>localhost<span>:8501</span></Url>
          <Slot $w={50}><ReadAloud /></Slot>
          <Slot $w={50}><Star size={22} color="#8a8a8a" strokeWidth={1.3} /></Slot>
        </Address>
        <Slot $w={8.5} />
        <Slot $w={55}><Puzzle size={21} strokeWidth={1.4} /></Slot>
        <Slot $w={5.5}><Separator /></Slot>
        <Slot $w={55}><SplitIcon /></Slot>
        <Slot $w={55}><MusicIcon /></Slot>
        <Slot $w={55}><FavList /></Slot>
        <Slot $w={55}><CollectIcon /></Slot>
        <Slot $w={55}><ShareIcon /></Slot>
        <Slot $w={55}><Ellipsis size={20} /></Slot>
        <Slot $w={52.5}><Copilot /></Slot>
      </ToolBar>

      <Middle>
        <LeftRail>
          <RailTop>
            <svg width="18" height="18" viewBox="0 0 18 18" fill="none" stroke="#e8e8e8" strokeWidth="1.4"><rect x="1" y="1" width="16" height="16" rx="3" /><path d="M1 5 H17" /><rect x="1" y="5" width="5.5" height="12" fill="#e8e8e8" /></svg>
          </RailTop>
          <PeekRow><PeekDot $c="#4285f4" /><PeekDot $c="#34a853" /></PeekRow>
          {leftRail.map((icon, i) => <RailItem key={i} $active={i === 14}>{icon}</RailItem>)}
          <RailDivider $w={40} $mt={3} />
          <RailItem $h={48}><Plus size={22} color="#e8e8e8" strokeWidth={1.2} /></RailItem>
        </LeftRail>

        <Center>
          <Bookmarks>
            {bookmarks.map(b => <Bookmark key={b.label} $w={b.w} $gap={b.gap}>{b.icon}{b.label}</Bookmark>)}
            <Chevron><ChevronRight size={22} strokeWidth={1.4} /></Chevron>
          </Bookmarks>
          <Page>
            <Content>
              <Heading>Live Stream Technologies</Heading>
              <CheckRow><Check />PYTHON/ MYSQL.</CheckRow>
              <Heading>VERZEO</Heading>
              <CheckRow><Check />Cyber security engineer.</CheckRow>
              <Title $mt={47}>Skills</Title>
              <SkillList>
                {skills.map(s => <SkillRow key={s.text}>{s.icon}{s.text}</SkillRow>)}
              </SkillList>
              <Title $mt={47}>Projects</Title>
              <Rule />
              <Project $mt={44}><Trophy />UNIVERSITY ADMIN ELIGIBILITY PREDICTOR (Domain: Applied Data Science) IBM PROJECT</Project>
              <Project $mt={20}><Trophy />TEXT SUMMARIZER USING NLP</Project>
            </Content>
          </Page>
          <BottomStrip />
        </Center>

        <RightRail>
          {rightRail.map((icon, i) => <RightItem key={i}>{icon}</RightItem>)}
          <RailDivider $w={35} $mt={16} />
          <RightItem $h={40} $mt={19}><Plus size={22} strokeWidth={1.2} /></RightItem>
          <Grow />
          <RailDivider $w={35} />
          <RightItem $h={54}><Settings size={22} strokeWidth={1.3} /></RightItem>
        </RightRail>
      </Middle>

      <TaskBar>
        <Weather>
          <Sun />
          <div>36°C<Sunny>Sunny</Sunny></div>
        </Weather>
        <Dock>
          <DockItem><WinLogo /></DockItem>
          <DockItem><TaskSearch /></DockItem>
          <DockItem><TaskView /></DockItem>
          <DockItem $dot><Folder /></DockItem>
          <DockItem><SublimeTile><SiSublimetext size={22} /></SublimeTile></DockItem>
          <DockItem $active><Edge /></DockItem>
          <DockItem $dot><FaWhatsapp size={32} color="#25d366" /></DockItem>
          <DockItem $dot><FaSkype size={32} color="#0a9adf" /></DockItem>
          <DockItem $dot><BiLogoVisualStudio size={34} color="#0f8bd8" /></DockItem>
          <DockItem $dot><GitApp /></DockItem>
        </Dock>
        <Tray>
          <Slot $w={40}><ChevronUp size={22} strokeWidth={2} /></Slot>
          <Slot $w={38}><Navigation size={20} color="#d8a0e0" strokeWidth={1.3} /></Slot>
          <Slot $w={44}><Wifi size={22} strokeWidth={1.6} /></Slot>
          <Slot $w={16}><Volume2 size={21} strokeWidth={1.4} /></Slot>
          <Slot $w={44}><Battery /></Slot>
          <Clock><span>4:20 PM</span><span>4/8/2024</span></Clock>
          <Slot $w={40}><BellZ /></Slot>
          <Slot $w={50}><CopilotPre /><PreBadge>PRE</PreBadge></Slot>
        </Tray>
      </TaskBar>
    </Screen>
  );
}
